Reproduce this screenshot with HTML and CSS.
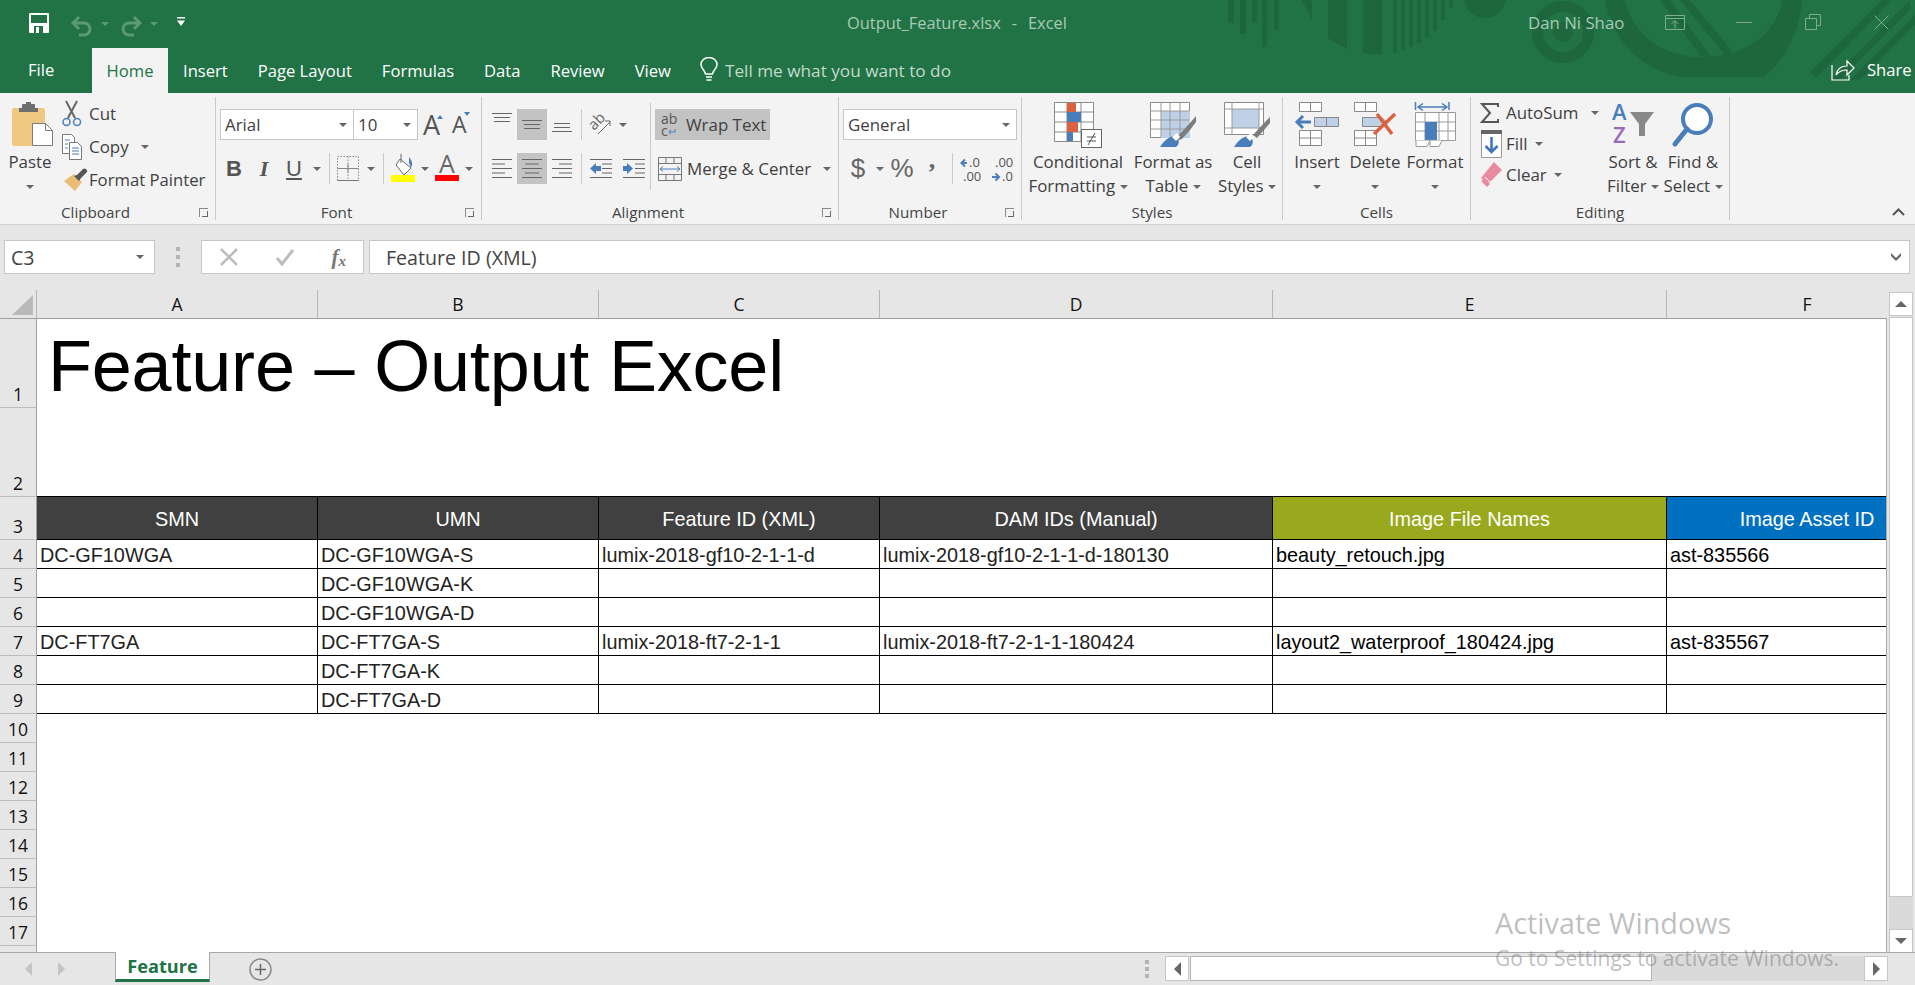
FILE: index.html
```html
<!DOCTYPE html>
<html lang="en">
<head>
<meta charset="utf-8">
<title>Output_Feature.xlsx - Excel</title>
<link rel="stylesheet" href="styles.css">
</head>
<body>
<div class="app">
  <header class="titlebar">
    <svg class="pattern" width="715" height="93" viewBox="1200 0 715 93" aria-hidden="true">
      <g fill="#1e663d">
        <rect x="1228" y="0" width="6" height="23"/><rect x="1240" y="0" width="6" height="34"/><rect x="1252" y="0" width="5" height="23"/><rect x="1262" y="0" width="5" height="47"/><rect x="1274" y="0" width="5" height="30"/>
        <path d="M1302 0h10v20z"/><path d="M1328 0h19v49l-19-11z"/><path d="M1363 0h19v54q-10 1-19-1z"/>
        <rect x="1393" y="0" width="4" height="53"/><rect x="1401" y="0" width="4" height="50"/><rect x="1409" y="0" width="4" height="47"/><rect x="1417" y="0" width="4" height="43"/><rect x="1425" y="0" width="4" height="38"/><rect x="1433" y="0" width="4" height="31"/><rect x="1441" y="0" width="4" height="20"/><rect x="1449" y="0" width="4" height="8"/>
        <circle cx="1485" cy="-3" r="21"/>
        <circle cx="1563" cy="32" r="10"/>
        <path d="M1605 0C1612 40 1642 70 1680 77H1764C1785 60 1800 30 1802 0H1782C1778 30 1750 57 1700 57C1660 57 1630 30 1625 0Z"/>
        <path d="M1680 0h10L1741 62l-9 2zM1660 0h10l46 64h-10z"/>
        <path d="M1810 72l72-72h10l-76 78zM1830 80l80-80v10l-70 70zM1850 80l65-65v10l-55 55z"/>
      </g>
      <circle cx="1563" cy="32" r="25.5" fill="none" stroke="#1e663d" stroke-width="11"/>
    </svg>
    <div class="qat">
      <svg class="save" width="20" height="20" viewBox="0 0 20 20"><path d="M1 0h18a1 1 0 0 1 1 1v18a1 1 0 0 1-1 1H1a1 1 0 0 1-1-1V1a1 1 0 0 1 1-1z" fill="#fff"/><rect x="2" y="2" width="16" height="8" fill="#217346"/><rect x="5" y="13" width="9" height="7" fill="#217346"/><rect x="7" y="14" width="3" height="6" fill="#fff"/></svg>
      <svg class="undo" width="22" height="22" viewBox="0 0 22 22"><path d="M8 2L2 8l6 6M2 8h11a6 6 0 0 1 0 12H8" fill="none" stroke="#5c9a76" stroke-width="3"/></svg>
      <span class="caret muted"></span>
      <svg class="redo" width="22" height="22" viewBox="0 0 22 22"><path d="M14 2l6 6-6 6M20 8H9a6 6 0 0 0 0 12h5" fill="none" stroke="#5c9a76" stroke-width="3"/></svg>
      <span class="caret muted"></span>
      <svg class="custom" width="8" height="9" viewBox="0 0 8 9"><rect width="8" height="1.5" fill="#fff"/><path d="M0 3.5h8L4 9z" fill="#fff"/></svg>
    </div>
    <div class="doc-title">Output_Feature.xlsx<span class="dash">-</span>Excel</div>
    <div class="win">
      <span class="user">Dan Ni Shao</span>
      <svg class="win-ic opt" width="20" height="15" viewBox="0 0 20 15"><path d="M.5.5h19v14H.5zM.5 3.5h19M10 13V6M6.500 9L10 5.500 13.500 9" fill="none" stroke="#7fab90"/></svg>
      <svg class="win-ic min" width="16" height="2" viewBox="0 0 16 2"><rect width="16" height="1" fill="#7fab90"/></svg>
      <svg class="win-ic rest" width="16" height="16" viewBox="0 0 16 16"><path d="M.5 4.500h11v11H.5zM4.500 4V.5h11v11H12" fill="none" stroke="#7fab90"/></svg>
      <svg class="win-ic close" width="15" height="15" viewBox="0 0 15 15"><path d="M.5.5l14 14M14.500.5l-14 14" fill="none" stroke="#7fab90"/></svg>
    </div>
    <nav class="tabs">
      <span class="tab file">File</span>
      <span class="tab active">Home</span>
      <span class="tab">Insert</span>
      <span class="tab">Page Layout</span>
      <span class="tab">Formulas</span>
      <span class="tab">Data</span>
      <span class="tab">Review</span>
      <span class="tab">View</span>
      <span class="tell">
        <svg width="18" height="25" viewBox="0 0 18 25"><path d="M5.500 17C5 13 1 11.500 1 7.500a8 7 0 0 1 16 0c0 4-4 5.500-4.500 9.500zM6 20h6M6.500 23h5" fill="none" stroke="#fff" stroke-width="1.500"/></svg>
        Tell me what you want to do
      </span>
      <span class="share">
        <svg width="24" height="22" viewBox="0 0 24 22"><path d="M1 6v15h17v-5M5 16c1-6 5-9 11-9V2l7 7-7 7v-5c-5 0-8 1-11 5z" fill="none" stroke="#fff" stroke-width="1.200"/></svg>
        Share
      </span>
    </nav>
  </header>

  <section class="ribbon">
    <div class="group g-clip">
      <div class="body flex">
        <div class="big paste">
          <div class="ico">
            <svg width="42" height="45" viewBox="0 0 42 45"><rect x="0" y="6" width="33" height="38" rx="2" fill="#efc882"/><path d="M10 6V3q0-1 1-1h3V0h5v2h3q1 0 1 1v3h3v4H7V6z" fill="#6e6e6e"/><path d="M20.500 21.500h13l7 7v15h-20z" fill="#fff" stroke="#7b7b7b"/><path d="M33.500 21.500v7h7" fill="none" stroke="#7b7b7b"/></svg>
          </div>
          <div class="txt">Paste</div>
          <div class="txt"><span class="caret"></span></div>
        </div>
        <div class="list clip-list">
          <div class="item"><span class="item-ic"><svg width="20" height="27" viewBox="0 0 20 27"><path d="M4 1l9 17M15 1L6 18" stroke="#666" stroke-width="2" fill="none"/><circle cx="4.500" cy="22" r="3.500" fill="none" stroke="#4a7ebb" stroke-width="1.500"/><circle cx="15" cy="22" r="3.500" fill="none" stroke="#4a7ebb" stroke-width="1.500"/></svg></span>Cut</div>
          <div class="item"><span class="item-ic"><svg width="20" height="26" viewBox="0 0 20 26"><path d="M.5.5h9l3 3v16H.5z" fill="#fff" stroke="#777"/><path d="M7.500 8.500h8l4 4v13h-12z" fill="#fff" stroke="#777"/><path d="M3 6h5M3 10h3M3 14h3M10 14h7M10 17h7M10 20h7" stroke="#4a7ebb"/></svg></span>Copy <span class="caret gap"></span></div>
          <div class="item"><span class="item-ic wide"><svg width="24" height="24" viewBox="0 0 24 24"><path d="M10 6l8 8-7 9L0 13z" fill="#e9bd74"/><path d="M13 7l6-6q1-1 3 0 2 2 1 3l-6 6-2 3-5-5z" fill="#555"/></svg></span><span class="fp">Format Painter</span></div>
        </div>
      </div>
      <div class="label lead">Clipboard</div>
      <span class="launch"></span>
    </div>

    <div class="group g-font">
      <div class="body stack">
        <div class="row">
          <div class="select font-name"><span>Arial</span><span class="caret"></span></div>
          <div class="select font-size"><span>10</span><span class="caret"></span></div>
          <span class="grow-a">A<i class="tri up"></i></span>
          <span class="shrink-a">A<i class="tri down"></i></span>
        </div>
        <div class="row">
          <span class="tb w30 fmt b">B</span>
          <span class="tb w30 fmt i">I</span>
          <span class="tb w30 fmt u">U</span>
          <span class="tb w16"><span class="caret"></span></span>
          <span class="vsep s-font1"></span>
          <span class="tb w22"><svg width="22" height="25" viewBox="0 0 22 25"><path d="M.5.500h21v24H.5zM11 .5v24M.5 12.500h21" fill="none" stroke="#888" stroke-dasharray="1.500 1.500"/><path d="M.5 24.500h21" stroke="#777"/><path d="M.5 12.500h21M11 8v9" stroke="#888"/></svg></span>
          <span class="tb w24"><span class="caret"></span></span>
          <span class="vsep s-font2"></span>
          <span class="tb w24 colorbtn"><svg width="24" height="29" viewBox="0 0 24 29"><path d="M9 6l11 9-7 7-8-10z" fill="#fff" stroke="#666"/><path d="M10 1v9" stroke="#666"/><path d="M18 4q5 6 2 11l-2-5z" fill="#4a7ebb"/><rect x="0" y="22" width="24" height="7" fill="#ffff00"/></svg></span>
          <span class="tb w20"><span class="caret"></span></span>
          <span class="tb w24 colorbtn fontcolor"><span class="a">A</span><i class="redbar"></i></span>
          <span class="tb w20"><span class="caret"></span></span>
        </div>
      </div>
      <div class="label lead">Font</div>
      <span class="launch"></span>
    </div>

    <div class="group g-align">
      <div class="body flex">
        <div class="stack align-left">
          <div class="row">
            <span class="tb w30"><svg class="v-top" width="20" height="10" viewBox="0 0 20 10"><path d="M0 .5h20M2 4.500h16M2 8.500h16" stroke="#666"/></svg></span>
            <span class="tb w30 on"><svg width="20" height="10" viewBox="0 0 20 10"><path d="M0 .5h20M2 4.500h16M2 8.500h16" stroke="#666"/></svg></span>
            <span class="tb w30"><svg class="v-bot" width="20" height="10" viewBox="0 0 20 10"><path d="M2 .5h16M2 4.500h16M0 8.500h20" stroke="#666"/></svg></span>
            <span class="vsep s-al"></span>
            <span class="tb w36"><svg width="22" height="22" viewBox="0 0 22 22"><text x="1" y="14" transform="rotate(-45 6 12)" class="ori">ab</text><path d="M8 20L20 8M15 7h5v5" fill="none" stroke="#666"/></svg></span>
            <span class="tb w6"><span class="caret"></span></span>
          </div>
          <div class="row">
            <span class="tb w30"><svg width="20" height="20" viewBox="0 0 20 20"><path d="M0 .5h20M0 5h13M0 9.500h20M0 14h13M0 18.500h20" stroke="#666"/></svg></span>
            <span class="tb w30 on"><svg width="20" height="20" viewBox="0 0 20 20"><path d="M0 .5h20M3 5h14M0 9.500h20M3 14h14M0 18.500h20" stroke="#666"/></svg></span>
            <span class="tb w30"><svg width="20" height="20" viewBox="0 0 20 20"><path d="M0 .5h20M7 5h13M0 9.500h20M7 14h13M0 18.500h20" stroke="#666"/></svg></span>
            <span class="vsep s-al"></span>
            <span class="tb w36"><svg width="22" height="20" viewBox="0 0 22 20"><path d="M0 .5h22M12 5h10M12 9.500h10M12 14h10M0 18.500h22" stroke="#666"/><path d="M0 9.500L6 4v3h5v5H6v3z" fill="#4a7ebb"/></svg></span>
            <span class="tb w30"><svg width="22" height="20" viewBox="0 0 22 20"><path d="M0 .5h22M12 5h10M12 9.500h10M12 14h10M0 18.500h22" stroke="#666"/><path d="M10 9.500L4 4v3H0v5h4v3z" fill="#4a7ebb"/></svg></span>
          </div>
        </div>
        <span class="vsep tall"></span>
        <div class="stack wrap-col">
          <div class="row wrap-on"><span class="ab">ab<br>c<svg width="8" height="7" viewBox="0 0 8 7"><path d="M7 0v3H1M3 .8L.8 3 3 5.200" fill="none" stroke="#4a7ebb"/></svg></span>Wrap Text</div>
          <div class="row merge"><svg width="24" height="24" viewBox="0 0 24 24"><path d="M.5.5h23v23H.5zM.5 6.500h23M.5 17.500h23M8 .5v6M16 .5v6M8 17.500v6M16 17.500v6" fill="none" stroke="#777"/><path d="M2 12h20M5 9.500L2 12l3 2.500M19 9.500l3 2.500-3 2.500" fill="none" stroke="#4a7ebb"/></svg><span class="mtext">Merge &amp; Center</span><span class="caret"></span></div>
        </div>
      </div>
      <div class="label lead">Alignment</div>
      <span class="launch"></span>
    </div>

    <div class="group g-num">
      <div class="body stack">
        <div class="row"><div class="select num-fmt"><span>General</span><span class="caret"></span></div></div>
        <div class="row">
          <span class="tb w30 sym dollar">$</span>
          <span class="tb w14"><span class="caret"></span></span>
          <span class="tb w30 sym">%</span>
          <span class="tb w30 sym comma">,</span>
          <span class="vsep s-num"></span>
          <span class="tb w28"><svg width="24" height="28" viewBox="0 0 24 28"><path d="M7 8H2M5 4.500L1.500 8 5 11.500" fill="none" stroke="#4a7ebb" stroke-width="2"/><text class="dec"><tspan x="9" y="12">.0</tspan><tspan x="3" y="26">.00</tspan></text></svg></span>
          <span class="tb w28 m3"><svg width="24" height="28" viewBox="0 0 24 28"><text class="dec"><tspan x="4" y="12">.00</tspan><tspan x="11" y="26">.0</tspan></text><path d="M1 22h6M4.500 18.500L8 22l-3.500 3.500" fill="none" stroke="#4a7ebb" stroke-width="2"/></svg></span>
        </div>
      </div>
      <div class="label lead">Number</div>
      <span class="launch"></span>
    </div>

    <div class="group g-styles">
      <div class="body flex">
        <div class="big w-cond">
          <div class="ico"><svg width="48" height="46" viewBox="0 0 48 46"><path d="M.5.5h39v39H.5zM.5 10h39M.5 20h39M.5 30h39M13 .5v39M27 .5v39" fill="#fff" stroke="#8a8a8a"/><rect x="13" y="1" width="9" height="9" fill="#dc6141"/><rect x="13" y="10" width="14" height="10" fill="#4a7ebb"/><rect x="13" y="20" width="11" height="10" fill="#dc6141"/><rect x="13" y="30" width="6" height="9" fill="#4a7ebb"/><rect x="27.500" y="27.500" width="20" height="18" fill="#fff" stroke="#666"/><path d="M33 35h9M33 39h9M41 31l-7 12" stroke="#555" fill="none"/></svg></div>
          <div class="txt">Conditional</div><div class="txt">Formatting <span class="caret"></span></div>
        </div>
        <div class="big w-fat">
          <div class="ico"><svg width="46" height="46" viewBox="0 0 46 46"><path d="M.5.5h39v35H.5z" fill="#fff" stroke="#8a8a8a"/><path d="M11 9h29v27H11z" fill="#bed1e6"/><path d="M.5 9h39M.5 18h39M.5 27h39M11 .5v35M20 .5v35M30 .5v35" stroke="#9a9a9a" fill="none"/><path d="M27 35l13-14 6-7v6l-6 8-8 9-3 1z" fill="#7d7d7d"/><path d="M10 45c3-5 8-10 14-11 4 1 6 4 4 9l-2 2z" fill="#4a7ebb"/><path d="M22 35l5-4 3 4-4 4z" fill="#fff"/></svg></div>
          <div class="txt">Format as</div><div class="txt">Table <span class="caret"></span></div>
        </div>
        <div class="big w-cell">
          <div class="ico"><svg width="46" height="46" viewBox="0 0 46 46"><path d="M.5.5h39v32H.5z" fill="#fff" stroke="#8a8a8a"/><path d="M8 7h27v19H8z" fill="#bed1e6"/><path d="M.5 7h39M.5 26h39M8 .5v32M35 .5v32" stroke="#9a9a9a" fill="none"/><path d="M29 33l11-12 6-6v6l-6 7-7 8z" fill="#7d7d7d"/><path d="M10 45c3-5 8-10 14-11 4 1 6 4 4 9l-2 2z" fill="#4a7ebb"/><path d="M22 35l5-4 3 4-4 4z" fill="#fff"/></svg></div>
          <div class="txt">Cell</div><div class="txt">Styles <span class="caret"></span></div>
        </div>
      </div>
      <div class="label">Styles</div>
    </div>

    <div class="group g-cells">
      <div class="body flex">
        <div class="big w-ins">
          <div class="ico"><svg width="44" height="44" viewBox="0 0 44 44"><path d="M4.500.5h22v9h-22zM15.500.5v9M4.500 28.500h22v15h-22zM4.500 36h22M15.500 28.500v15" fill="#fff" stroke="#888"/><path d="M19.500 15.500h24v9h-24zM31.500 15.500v9" fill="#bed1e6" stroke="#888"/><path d="M16 20H2M8 14l-6 6 6 6" fill="none" stroke="#4a7ebb" stroke-width="3"/></svg></div>
          <div class="txt">Insert</div><div class="txt"><span class="caret"></span></div>
        </div>
        <div class="big w-del">
          <div class="ico"><svg width="44" height="44" viewBox="0 0 44 44"><path d="M1.500.5h22v9h-22zM12.500.5v9M1.500 28.500h22v15h-22zM1.500 36h22M12.500 28.500v15" fill="#fff" stroke="#888"/><path d="M9.500 15.500h19l5 4.500-5 4.500h-19z" fill="#bed1e6" stroke="#888"/><path d="M21 32L42 12M24 12l15 20" fill="none" stroke="#dc6141" stroke-width="3.500"/></svg></div>
          <div class="txt">Delete</div><div class="txt"><span class="caret"></span></div>
        </div>
        <div class="big w-form">
          <div class="ico"><svg width="41" height="46" viewBox="0 0 41 46"><path d="M.5 0v8M34 0v8M3 5h29M8 1.500L3 5l5 3.500M27 1.500L32 5l-5 3.500" fill="none" stroke="#4a7ebb" stroke-width="1.500"/><path d="M.5 10.500h40v28H.5zM.5 20h40M.5 29h40M10 10.500v28M24 10.500v28M33 10.500v28" fill="#fff" stroke="#999"/><rect x="10" y="20" width="12" height="18" fill="#4a7ebb"/><path d="M1 38.500v6h11l3-6M15 38.500v6h9l3-6" fill="#fff" stroke="#999"/></svg></div>
          <div class="txt">Format</div><div class="txt"><span class="caret"></span></div>
        </div>
      </div>
      <div class="label">Cells</div>
    </div>

    <div class="group g-edit">
      <div class="body flex">
        <div class="list edit-list">
          <div class="item"><span class="edit-ic"><svg width="18" height="20" viewBox="0 0 18 20"><path d="M17 4V1H1l8 9-8 9h16v-3" fill="none" stroke="#555" stroke-width="2"/></svg></span>AutoSum<span class="caret gap2"></span></div>
          <div class="item"><span class="edit-ic"><svg width="21" height="28" viewBox="0 0 21 28"><path d="M.5.5h20v27H.5z" fill="#fff" stroke="#999"/><rect x="0" y="0" width="21" height="4" fill="#666"/><path d="M10.500 7v15M4.500 16l6 6 6-6" fill="none" stroke="#3d74b5" stroke-width="2.500"/></svg></span>Fill<span class="caret gap3"></span></div>
          <div class="item"><span class="edit-ic"><svg width="21" height="25" viewBox="0 0 21 25"><path d="M13 0l8 8L8 21l-4-1-4-4z" fill="#e98ba0"/><path d="M0 19l6 6 3-3-5-5z" fill="#e98ba0"/><path d="M4 15l5 5" stroke="#fff"/></svg></span>Clear<span class="caret gap3"></span></div>
        </div>
        <div class="big w-sort">
          <div class="ico"><svg width="44" height="46" viewBox="0 0 44 46"><text class="az"><tspan class="blue" x="1" y="18">A</tspan><tspan class="purple" x="2" y="41">Z</tspan></text><path d="M19 10h24l-9 12v12h-6V22z" fill="#888"/></svg></div>
          <div class="txt">Sort &amp;</div><div class="txt">Filter <span class="caret"></span></div>
        </div>
        <div class="big w-find">
          <div class="ico"><svg width="42" height="46" viewBox="0 0 42 46"><circle cx="25" cy="17" r="14" fill="#fff" stroke="#4a7ebb" stroke-width="4"/><path d="M15 27L3 42" stroke="#4a7ebb" stroke-width="5" stroke-linecap="round"/></svg></div>
          <div class="txt">Find &amp;</div><div class="txt">Select <span class="caret"></span></div>
        </div>
      </div>
      <div class="label">Editing</div>
    </div>
    <svg class="collapse" width="13" height="8" viewBox="0 0 13 8"><path d="M1 7l5.500-5.500L12 7" fill="none" stroke="#555" stroke-width="2"/></svg>
  </section>

  <section class="formula">
    <div class="namebox"><span>C3</span><span class="caret"></span></div>
    <div class="grip"><i></i><i></i><i></i></div>
    <div class="fxbox">
      <svg width="18" height="18" viewBox="0 0 18 18"><path d="M1 1l16 16M17 1L1 17" stroke="#bcbcbc" stroke-width="2.500" fill="none"/></svg>
      <svg width="18" height="18" viewBox="0 0 18 18"><path d="M1 10l5 6L17 2" stroke="#bcbcbc" stroke-width="3" fill="none"/></svg>
      <span class="fx">f<sub>x</sub></span>
    </div>
    <div class="fbar"><span>Feature ID (XML)</span><svg width="12" height="10" viewBox="0 0 12 10"><path d="M1 1l5 5 5-5v3l-5 5-5-5z" fill="#666"/></svg></div>
  </section>

  <main class="sheet-wrap">
    <div class="sheet">
      <div class="grid">
        <div class="corner"><svg width="21" height="20" viewBox="0 0 21 20"><path d="M21 0v20H0z" fill="#b9b9b9"/></svg></div>
        <div class="ch">A</div><div class="ch">B</div><div class="ch">C</div><div class="ch">D</div><div class="ch">E</div><div class="ch">F</div>
        <div class="title-cell">Feature – Output Excel</div>
        <div class="blank"></div>
        <div class="rn">1</div>
        <div class="rn">2</div>
        <div class="rn">3</div>
        <div class="hd">SMN</div><div class="hd">UMN</div><div class="hd">Feature ID (XML)</div><div class="hd">DAM IDs (Manual)</div><div class="hd olive">Image File Names</div><div class="hd blue">Image Asset ID</div>
        <div class="rn">4</div>
        <div class="c">DC-GF10WGA</div><div class="c">DC-GF10WGA-S</div><div class="c">lumix-2018-gf10-2-1-1-d</div><div class="c">lumix-2018-gf10-2-1-1-d-180130</div><div class="c k">beauty_retouch.jpg</div><div class="c k">ast-835566</div>
        <div class="rn">5</div>
        <div class="c"></div><div class="c">DC-GF10WGA-K</div><div class="c"></div><div class="c"></div><div class="c"></div><div class="c"></div>
        <div class="rn">6</div>
        <div class="c"></div><div class="c">DC-GF10WGA-D</div><div class="c"></div><div class="c"></div><div class="c"></div><div class="c"></div>
        <div class="rn">7</div>
        <div class="c">DC-FT7GA</div><div class="c">DC-FT7GA-S</div><div class="c">lumix-2018-ft7-2-1-1</div><div class="c">lumix-2018-ft7-2-1-1-180424</div><div class="c k">layout2_waterproof_180424.jpg</div><div class="c k">ast-835567</div>
        <div class="rn">8</div>
        <div class="c"></div><div class="c">DC-FT7GA-K</div><div class="c"></div><div class="c"></div><div class="c"></div><div class="c"></div>
        <div class="rn">9</div>
        <div class="c"></div><div class="c">DC-FT7GA-D</div><div class="c"></div><div class="c"></div><div class="c"></div><div class="c"></div>
        <div class="rn">10</div><div class="rn">11</div><div class="rn">12</div><div class="rn">13</div><div class="rn">14</div><div class="rn">15</div><div class="rn">16</div><div class="rn">17</div><div class="rn stub"></div>
      </div>
    </div>
    <div class="vscroll">
      <div class="sbtn"><i class="tri-up"></i></div>
      <div class="vthumb"></div>
      <div class="vtrack"></div>
      <div class="sbtn"><i class="tri-down"></i></div>
    </div>
  </main>

  <footer class="tabbar">
    <div class="sheet-nav"><i class="nl"></i><i class="nr"></i></div>
    <div class="sheet-tab">Feature</div>
    <div class="add"><svg width="23" height="23" viewBox="0 0 23 23"><circle cx="11.500" cy="11.500" r="10.500" fill="none" stroke="#8a8a8a" stroke-width="1.500"/><path d="M11.500 6v11M6 11.500h11" stroke="#666" stroke-width="1.500"/></svg></div>
    <div class="hgrip"><i></i><i></i><i></i></div>
    <div class="hscroll">
      <div class="hbtn"><i class="nl dark"></i></div>
      <div class="hthumb"></div>
      <div class="htrack"></div>
      <div class="hbtn"><i class="nr dark"></i></div>
    </div>
  </footer>

  <div class="activate">
    <div class="a1">Activate Windows</div>
    <div class="a2">Go to Settings to activate Windows.</div>
  </div>
</div>
</body>
</html>
```

FILE: styles.css
```css
* { box-sizing: border-box; }
html, body { margin: 0; padding: 0; height: 100%; overflow: hidden; }
body { font-family: "Open Sans", "Noto Sans", sans-serif; color: #3f3f3f; }
i { font-style: normal; display: block; }
.app { position: relative; width: 1915px; height: 985px; display: flex; flex-direction: column; background: #e6e6e6; overflow: hidden; }

/* title bar */
.titlebar { position: relative; height: 93px; flex: none; background: #217346; display: flex; flex-direction: column; }
.pattern { position: absolute; right: 0; top: 0; }
.qat { position: relative; height: 48px; flex: none; display: flex; align-items: flex-start; padding-top: 13px; padding-left: 29px; }
.save { margin-right: 22px; }
.undo, .redo { margin-top: 2px; }
.qat .caret { margin: 9px 0 0 8px; }
.qat .redo { margin-left: 11px; }
.custom { margin: 4px 0 0 19px; }
.caret { display: inline-block; width: 0; height: 0; border-left: 4px solid transparent; border-right: 4px solid transparent; border-top: 4px solid #666; vertical-align: middle; }
.caret.muted { border-top-color: #5c9a76; }
.doc-title { position: absolute; left: 847px; top: 12px; font-size: 16.4px; line-height: 22px; color: #a8cbb6; white-space: nowrap; }
.dash { margin: 0 11px; }
.win { position: absolute; right: 0; top: 0; width: 400px; height: 48px; }
.user { position: absolute; left: 13px; top: 12px; font-size: 16.8px; line-height: 22px; color: #a8cbb6; }
.win-ic { position: absolute; }
.opt { left: 150px; top: 15px; }
.min { left: 221px; top: 22px; }
.rest { left: 290px; top: 14px; }
.close { left: 359px; top: 15px; }
.tabs { position: relative; height: 45px; display: flex; align-items: stretch; font-size: 16.6px; color: #fff; }
.tab { padding: 0 15px; line-height: 45px; white-space: nowrap; }
.tab.file { width: 92px; padding: 0 0 0 28px; line-height: 44px; }
.tab.active { width: 76px; padding: 0; text-align: center; background: #f3f3f3; color: #217346; }
.tell { display: flex; align-items: center; margin-left: 14px; gap: 7px; color: #c3dacb; font-size: 17.2px; white-space: nowrap; }
.tell svg { margin-bottom: 2px; }
.share { position: absolute; left: 1831px; top: 10px; display: flex; align-items: center; gap: 12px; line-height: 24px; }

/* ribbon */
.ribbon { position: relative; height: 132px; flex: none; background: #f3f3f3; border-bottom: 1px solid #d2d2d2; display: flex; padding-top: 4px; font-size: 16.9px; color: #3f3f3f; }
.ribbon svg { overflow: visible; }
.group { position: relative; height: 123px; border-right: 1px solid #c9c9c9; display: flex; flex-direction: column; flex: none; }
.g-clip { width: 216px; }
.g-font { width: 266px; }
.g-align { width: 357px; }
.g-num { width: 183px; }
.g-styles { width: 261px; }
.g-cells { width: 188px; }
.g-edit { width: 259px; }
.body { height: 107px; flex: none; }
.flex { display: flex; }
.stack { display: flex; flex-direction: column; }
.label { height: 16px; line-height: 16px; text-align: center; font-size: 15.2px; color: #444; white-space: nowrap; }
.label.lead { padding-right: 24px; }
.launch { position: absolute; right: 7px; bottom: 3px; width: 9px; height: 9px; border-left: 1px solid #8a8a8a; border-top: 1px solid #8a8a8a; }
.launch::after { content: ""; position: absolute; right: 0; bottom: 0; width: 5px; height: 5px; border-right: 1px solid #666; border-bottom: 1px solid #666; }
.big { display: flex; flex-direction: column; align-items: center; flex: none; }
.ico { height: 53px; width: 100%; display: flex; justify-content: center; align-items: flex-start; padding-top: 5px; }
.txt { height: 24px; line-height: 24px; white-space: nowrap; }
.paste { width: 60px; }
.paste .ico svg { margin-left: 6px; }
.list { display: flex; flex-direction: column; flex: none; }
.item { display: flex; align-items: center; white-space: nowrap; }
.clip-list { padding-left: 2px; }
.clip-list .item { height: 33px; }
.item-ic { width: 27px; display: flex; justify-content: flex-start; flex: none; }
.item-ic.wide svg { margin-left: 2px; }
.fp { font-size: 16.7px; }
.caret.gap { margin-left: 12px; }
.caret.gap2 { margin-left: 13px; }
.caret.gap3 { margin-left: 7px; }

.g-font .stack, .g-num .stack { padding-top: 12px; padding-left: 4px; }
.row { display: flex; align-items: center; height: 31px; flex: none; }
.row + .row { margin-top: 13px; }
.select { height: 31px; background: #fff; border: 1px solid #c6c6c6; display: flex; align-items: center; justify-content: space-between; padding: 0 6px 0 4px; flex: none; }
.font-name { width: 134px; }
.font-size { width: 65px; margin-left: -1px; }
.num-fmt { width: 174px; }
.grow-a, .shrink-a { position: relative; font-size: 27px; line-height: 31px; color: #555; flex: none; }
.grow-a { margin-left: 5px; }
.shrink-a { font-size: 23px; margin-left: 12px; }
.tri { position: absolute; top: 6px; left: 100%; width: 0; height: 0; border-left: 3.5px solid transparent; border-right: 3.5px solid transparent; }
.tri.up { border-bottom: 4px solid #4a7ebb; margin-left: -3px; }
.tri.down { border-top: 4px solid #4a7ebb; margin-left: -3px; top: 3px; }
.tb { height: 31px; display: flex; align-items: center; justify-content: center; flex: none; }
.w6 { width: 6px; }
.w14 { width: 14px; }
.w16 { width: 16px; }
.w20 { width: 20px; }
.w22 { width: 22px; }
.w24 { width: 24px; }
.w28 { width: 28px; }
.w30 { width: 30px; }
.w36 { width: 36px; }
.m3 { margin-left: 3px; }
.fmt { font-size: 22px; color: #555; font-family: "Liberation Sans", sans-serif; }
.fmt.b { font-weight: 700; }
.fmt.i { font-style: italic; font-family: "Liberation Serif", serif; font-weight: 700; }
.fmt.u { text-decoration: underline; text-underline-offset: 2px; }
.g-font .row:last-child { padding-left: 0; margin-left: -1px; }
.vsep { width: 1px; height: 31px; background: #c9c9c9; flex: none; }
.s-font1 { margin: 0 7px 0 4px; }
.s-font2 { margin: 0 7px 0 0; }
.s-al { margin: 0 1px 0 4px; }
.s-num { margin: 0 5px; }
.vsep.tall { height: 87px; margin-top: 6px; }
.g-align .align-left { width: 168px; flex: none; padding-top: 12px; padding-left: 5px; }
.tb.on { background: #c3c3c3; }
.v-top { margin-bottom: 13px; }
.v-bot { margin-top: 6px; }
.w36 { justify-content: flex-start; padding-left: 7px; }
.ori { font: 15px "Open Sans", sans-serif; fill: #666; }
.w6 { justify-content: flex-start; }
.wrap-col { padding-top: 12px; padding-left: 4px; }
.wrap-on { width: 115px; background: #c3c3c3; padding-left: 6px; white-space: nowrap; }
.ab { display: block; font-size: 14px; line-height: 12px; color: #555; margin-right: 6px; width: 19px; flex: none; }
.merge { white-space: nowrap; padding-left: 3px; }
.mtext { margin: 0 12px 0 5px; }
.sym { font-size: 26px; color: #666; font-family: "Liberation Sans", sans-serif; }
.comma { font-weight: 700; padding-bottom: 17px; font-family: "Liberation Serif", serif; }
.dec { font: 13px "Open Sans", sans-serif; fill: #555; }
.colorbtn svg { margin-top: -2px; }
.fontcolor { position: relative; flex-direction: column; }
.fontcolor .a { font-size: 25px; line-height: 24px; color: #666; margin-top: -6px; }
.redbar { width: 24px; height: 6px; background: #ff0000; }
.w-cond { width: 100px; margin-left: 6px; }
.w-fat { width: 90px; }
.w-cell { width: 58px; }
.w-ins { width: 58px; margin-left: 5px; }
.w-del { width: 58px; }
.w-form { width: 62px; }
.edit-list { width: 132px; padding-left: 10px; }
.edit-list .item { height: 31px; }
.edit-ic { width: 25px; display: flex; flex: none; }
.w-sort, .w-find { width: 60px; }
.az { font: 600 22px "Open Sans", sans-serif; }
.az .blue { fill: #4a7ebb; }
.az .purple { fill: #9b67bd; }
.collapse { position: absolute; right: 10px; top: 115px; }

/* formula bar */
.formula { height: 65px; flex: none; display: flex; padding-top: 15px; align-items: flex-start; background: #e6e6e6; font-size: 19.6px; color: #444; }
.namebox { width: 151px; height: 34px; margin-left: 4px; background: #fff; border: 1px solid #c6c6c6; display: flex; align-items: center; justify-content: space-between; padding: 0 10px 0 6px; flex: none; }
.grip { width: 46px; height: 34px; display: flex; flex-direction: column; align-items: center; justify-content: center; gap: 4px; flex: none; }
.grip i, .hgrip i { width: 4px; height: 4px; background: #b4b4b4; }
.fxbox { width: 163px; height: 34px; background: #fff; border: 1px solid #c6c6c6; display: flex; align-items: center; justify-content: space-between; padding: 0 17px 0 18px; flex: none; }
.fx { font: italic 700 21px "Liberation Serif", serif; color: #777; line-height: 28px; }
.fx sub { font-size: 15px; vertical-align: -2px; line-height: 0; }
.fbar { width: 1541px; height: 34px; margin-left: 5px; background: #fff; border: 1px solid #c6c6c6; display: flex; align-items: center; justify-content: space-between; padding: 0 7px 0 16px; flex: none; }

/* sheet */
.sheet-wrap { height: 662px; flex: none; display: flex; }
.sheet { width: 1887px; height: 662px; overflow: hidden; flex: none; position: relative; }
.sheet::after { content: ""; position: absolute; right: 0; top: 28px; bottom: 0; width: 1px; background: #a9a9a9; }
.grid { display: grid; width: 1948px; grid-template-columns: 37px repeat(3, 281px) 393px 394px 281px; grid-template-rows: 29px 89px 89px 43px repeat(14, 29px) 6px; background: #fff; }
.corner { background: #e6e6e6; border-right: 1px solid #b5b5b5; border-bottom: 1px solid #9f9f9f; display: flex; align-items: flex-end; padding: 0 0 3px 12px; }
.ch { background: #e6e6e6; border-right: 1px solid #b5b5b5; border-bottom: 1px solid #9f9f9f; text-align: center; font-size: 17.5px; line-height: 29px; color: #111; }
.rn { grid-column: 1; background: #e6e6e6; border-right: 1px solid #9f9f9f; border-bottom: 1px solid #bcbcbc; display: flex; align-items: flex-end; justify-content: center; font-size: 17.5px; line-height: 26px; color: #111; }
.rn.stub { border-bottom: 0; }
.title-cell { grid-column: 2 / -1; grid-row: 2 / 4; border-bottom: 1px solid #000; background: #fff; font-family: "Liberation Sans", Arial, sans-serif; font-size: 72px; line-height: 80px; color: #000; padding: 7px 0 0 11px; letter-spacing: -0.2px; white-space: nowrap; }
.blank { grid-column: 2 / -1; grid-row: 11 / 20; background: #fff; }
.hd, .c { font-family: "Liberation Sans", Arial, sans-serif; font-size: 19.85px; white-space: nowrap; }
.hd { background: #404040; color: #fff; border-right: 1px solid #000; border-bottom: 1px solid #000; display: flex; align-items: center; justify-content: center; padding-top: 2px; }
.hd.olive { background: #99a91e; }
.hd.blue { background: #0070c0; }
.c { border-right: 1px solid #000; border-bottom: 1px solid #000; color: #222; padding-left: 3px; line-height: 31px; overflow: hidden; }
.c.k { color: #000; }
.vscroll { width: 24px; margin-left: 2px; padding-top: 2px; display: flex; flex-direction: column; flex: none; }
.sbtn { width: 24px; height: 24px; background: #fff; border: 1px solid #c6c6c6; display: flex; align-items: center; justify-content: center; flex: none; }
.vthumb { height: 580px; margin-top: 1px; background: #fff; border: 1px solid #c6c6c6; flex: none; }
.vtrack { height: 32px; background: #dadada; flex: none; }
.tri-up, .tri-down { width: 0; height: 0; border-left: 6px solid transparent; border-right: 6px solid transparent; }
.tri-up { border-bottom: 6px solid #666; }
.tri-down { border-top: 6px solid #666; }

/* tabs bar */
.tabbar { height: 33px; flex: none; display: flex; border-top: 1px solid #a8a8a8; background: #e6e6e6; position: relative; }
.sheet-nav { width: 115px; display: flex; align-items: center; gap: 26px; padding-left: 25px; flex: none; }
.nl, .nr { width: 0; height: 0; border-top: 7px solid transparent; border-bottom: 7px solid transparent; }
.nl { border-right: 7px solid #c4c4c4; }
.nr { border-left: 7px solid #c4c4c4; }
.nl.dark { border-right-color: #666; }
.nr.dark { border-left-color: #666; }
.sheet-tab { width: 95px; height: 30px; background: #fff; border-left: 1px solid #a8a8a8; border-right: 1px solid #a8a8a8; border-bottom: 3px solid #217346; color: #217346; font-weight: 700; font-size: 18.2px; line-height: 26px; text-align: center; flex: none; margin-top: -1px; padding-top: 1px; }
.add { margin-left: 39px; padding-top: 5px; flex: none; }
.hgrip { position: absolute; left: 1145px; top: 7px; display: flex; flex-direction: column; gap: 3px; }
.hscroll { position: absolute; left: 1165px; top: 3px; width: 723px; height: 25px; display: flex; }
.hbtn { width: 24px; height: 25px; background: #fff; border: 1px solid #c6c6c6; display: flex; align-items: center; justify-content: center; flex: none; }
.hthumb { width: 462px; margin-left: 1px; background: #fff; border: 1px solid #b5b5b5; flex: none; }
.htrack { width: 212px; background: #dadada; flex: none; }

/* watermark */
.activate { position: absolute; left: 1495px; top: 905px; color: rgba(110,110,110,.45); white-space: nowrap; pointer-events: none; }
.a1 { font-size: 28.8px; line-height: 36px; }
.a2 { font-size: 21px; line-height: 24px; margin-top: 5px; }
```
